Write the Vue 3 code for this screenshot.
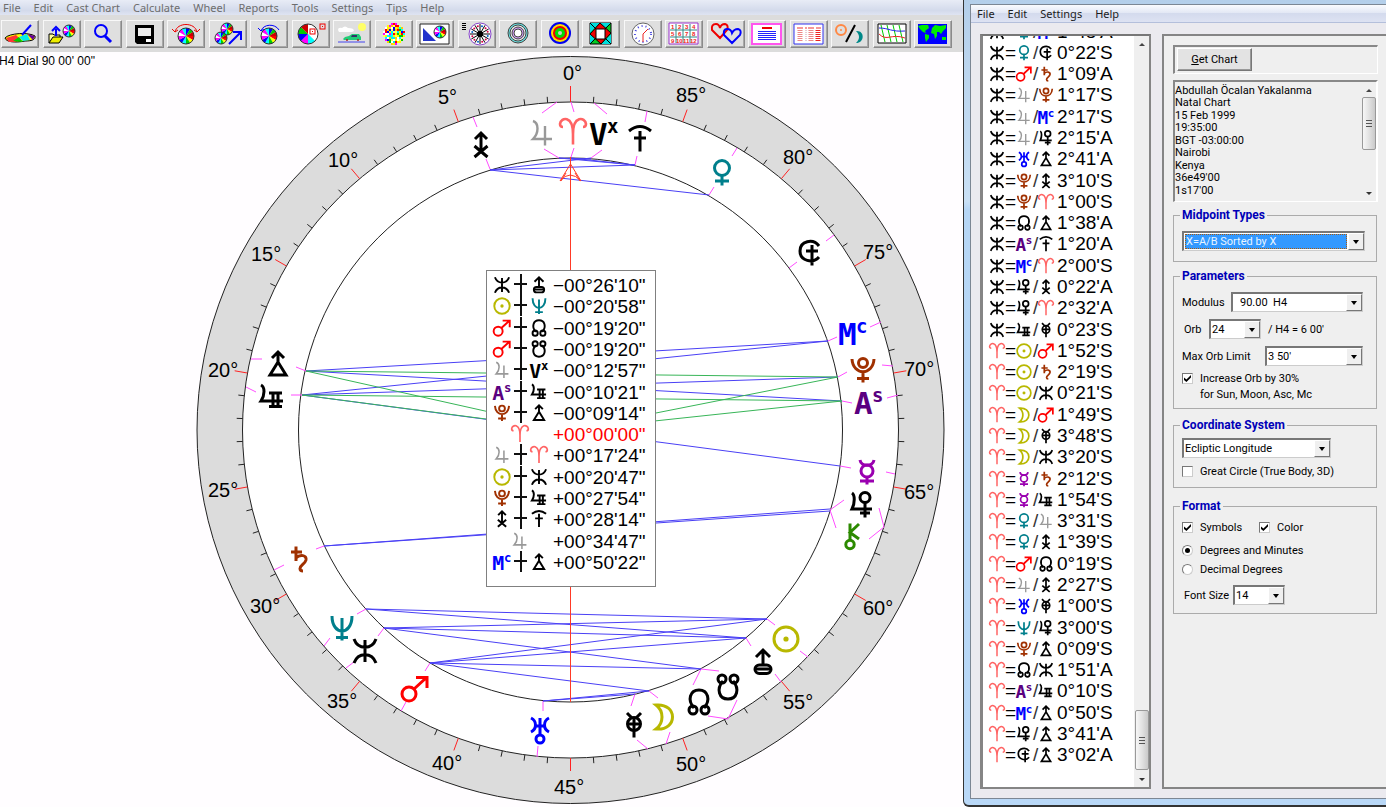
<script setup>
import { h, ref } from 'vue'

const BLACK = '#000000'
const MONO = '"DejaVu Sans Mono", monospace'

const label = (big, small) =>
  `<text x="-15" y="12" font-family='${MONO}' font-size="31" font-weight="700" fill="currentColor" stroke="none">${big}</text>` +
  `<text x="3" y="0" font-family='${MONO}' font-size="19" font-weight="700" fill="currentColor" stroke="none">${small}</text>`

/* Each drawing is centred on 0,0 in a box 28 units wide. */
const GLYPHS = {
  sun: ['#b8b800', '<circle r="12"/><circle r="2.6" fill="currentColor" stroke="none"/>'],
  moon: ['#b8b800', '<path d="M-8-12C14-14 14 14-8 12C0 6 0-6-8-12Z"/>'],
  mercury: ['#9a00b0', '<path d="M-7-12C-6-5 6-5 7-12M0 5V12.500M-7 9H7"/><circle cy="-1" r="6"/>'],
  venus: ['#007f8c', '<circle cy="-5" r="7.500"/><path d="M0 3V12.500M-7 8H7"/>'],
  mars: ['#ff0000', '<circle cx="-6" cy="5" r="7"/><path d="M-1 0L11-11M1-11.500H12V-1"/>'],
  jupiter: ['#999999', '<path stroke-width="2.400" d="M-9-12C-3-10-3 0-9 6H10M3-7V12.500"/>'],
  saturn: ['#a03000', '<path d="M-3-12.500V2M-8-7H3M-3-1C1-5 8-4 7 1C6 5 1 6 1 9.500Q1 12 4 12"/>'],
  uranus: ['#0000ff', '<path d="M-9-12C-3-9-3-1-9 2M9-12C3-9 3-1 9 2M-5-4H5M0-12V5"/><circle cy="9" r="4"/>'],
  neptune: ['#007f8c', '<path d="M-10-12C-10 8 10 8 10-12M0-10V12.500M-6 9.500H6"/>'],
  pluto: ['#a03000', '<circle cy="-7" r="4.500"/><path d="M-11-11C-10 6 10 6 11-11M0 2V12.500M-6 8.500H6"/>'],
  node: [BLACK, '<path d="M-5 6C-12-2-9-12 0-12S12-2 5 6"/><circle cx="-6" cy="8" r="4"/><circle cx="6" cy="8" r="4"/>'],
  snode: [BLACK, '<path d="M-5-6C-12 2-9 12 0 12S12 2 5-6"/><circle cx="-6" cy="-8" r="4"/><circle cx="6" cy="-8" r="4"/>'],
  aries: ['#ff6464', '<path stroke-width="2.600" d="M0 12.500V2C0-17-12-15-13-8Q-13-5-10-5M0 2C0-17 12-15 13-8Q13-5 10-5"/>'],
  chiron: ['#2c8a00', '<path d="M-3-12.500V4M6-12L-3-3.500L6 3"/><circle cx="-3" cy="8.500" r="4.200"/>'],
  asc: ['#5a0080', label('A', 's')],
  mc: ['#0000ff', label('M', 'c')],
  vertex: [BLACK, label('V', 'x')],
  poseidon: [BLACK, '<path d="M-11-12C-7-1 7-1 11-12M-11 12C-7 1 7 1 11 12M0-11V11"/>'],
  zeus: [BLACK, '<path d="M0-12V3M-7-5L0-12L7-5M-8 7H8"/><rect x="-8" y="3" width="16" height="8.500" rx="4.250"/>'],
  vulcanus: [BLACK, '<path d="M0-12.500V6M-6-6L0-12L6-6M-6.500 1L6.500 12M6.500 1L-6.500 12"/>'],
  kronos: [BLACK, '<path d="M0-12V0M-6-6L0-12L6-6M0-2L-8 11H8Z"/>'],
  admetos: [BLACK, '<path d="M-11-8Q0-17 11-8M0-8V12.500M-6-1H6"/>'],
  apollon: [BLACK, '<path d="M-11-12C-7-10-7-2-11 4H11M-3-4H10M-3 9.500H10M1-4V9.500M6-4V9.500"/>'],
  cupido: [BLACK, '<path d="M-10-12C-7-10-7-2-10 4H10M3-3V12.500M-2 8H8"/><circle cx="3" cy="-7.500" r="5"/>'],
  hades: [BLACK, '<path d="M9-7C3-15-10-12-10-2S3 11 9 4M2-8V12.500M-4-2H8"/>'],
  hermes: [BLACK, '<path d="M-7-12L-2-7M7-12L2-7M-7-1H7M0-7V12.500"/><circle r="6.500" cy="-1"/>']
}

const Glyph = ({ name, x, y, size }) =>
  h('svg', {
    x: x === undefined ? undefined : x - size / 2,
    y: y === undefined ? undefined : y - size / 2,
    width: size,
    height: size,
    viewBox: '-14 -14 28 28',
    overflow: 'visible',
    fill: 'none',
    stroke: 'currentColor',
    color: GLYPHS[name][0],
    'stroke-width': 3,
    'aria-hidden': 'true',
    innerHTML: GLYPHS[name][1]
  })
Glyph.props = ['name', 'x', 'y', 'size']

/* ---------- toolbar ---------- */
const HUES = ['#f00', '#ff0', '#0c0', '#0ff', '#00f', '#f0f', '#fff', '#f0f', '#0ff', '#00f', '#0c0', '#c00']
const pie = (cx, cy, r, hues = HUES) =>
  hues
    .map((c, i) => {
      const a = (i / hues.length) * Math.PI * 2
      const b = ((i + 1) / hues.length) * Math.PI * 2
      return `<path fill="${c}" d="M${cx} ${cy}L${cx + r * Math.cos(a)} ${cy + r * Math.sin(a)}A${r} ${r} 0 0 1 ${cx + r * Math.cos(b)} ${cy + r * Math.sin(b)}Z"/>`
    })
    .join('') + `<circle cx="${cx}" cy="${cy}" r="${r}" fill="none" stroke="#333"/>`

const mosaic = () => {
  let s = ''
  const c = ['#f00', '#ff0', '#0c0', '#0ff', '#00f', '#f0f', '#fff', '#fe0', '#fc0', '#0ee', '#ff6']
  for (let y = -5; y <= 5; y++)
    for (let x = -5; x <= 5; x++)
      if (x * x + y * y < 29)
        s += `<rect x="${18 + x * 2}" y="${13 + y * 2}" width="2" height="2" fill="${c[(x * x * 5 + y * y * 3 + x * y * 7 + x * 2 + y * 4 + 1100) % 11]}"/>`
  return s
}

const spokes = () => {
  let s = ''
  for (let i = 0; i < 12; i++) {
    const a = (i * Math.PI) / 6
    s += `<path stroke="#000" d="M22 14L${22 + 10 * Math.cos(a)} ${14 + 10 * Math.sin(a)}"/><circle cx="${22 + 8 * Math.cos(a + 0.25)}" cy="${14 + 8 * Math.sin(a + 0.25)}" r="1" fill="${i % 3 ? '#d04' : '#06c'}"/>`
  }
  return s
}

const TOOLS = [
  ['New chart', '<path d="M4 18C8 13 28 12 34 16C35 20 30 21 24 21C14 23 5 22 4 18Z" fill="#ff0" stroke="#000"/><path d="M5 18L15 15L18 18L14 22H8Z" fill="#f33"/><path d="M12 21L18 17L22 22Z" fill="#0c0"/><path d="M18 17L26 14L29 20L22 21Z" fill="#0ee"/><path d="M26 14L34 16L32 20Z" fill="#609"/><path d="M30 5L21 15" stroke="#00f" stroke-width="2"/>'],
  ['Open chart', '<path d="M6 23V14H10L11 15H17V18" fill="#ff9" stroke="#000"/><path d="M6 23L10 17H20L16 23Z" fill="#ee0" stroke="#000"/><path d="M13 16V9M9 11L13 7L17 11" stroke="#00f" stroke-width="2" fill="none"/>' + pie(26, 11, 6)],
  ['Find', '<circle cx="17" cy="11" r="6" fill="none" stroke="#00f" stroke-width="2"/><path d="M21 16L27 22" stroke="#00f" stroke-width="3"/>'],
  ['Save', '<path d="M9 5H28V24H11L9 22Z" fill="#000"/><path d="M12 8H25V16H12Z" fill="#eee"/><path d="M20 19H25V22H20Z" fill="#fff"/>'],
  ['Rotate wheel', pie(19, 16, 8) + '<path d="M8 12C10 2 28 2 30 12M5 9L8 12L11 10M27 10L30 12L33 9" fill="none" stroke="#e00"/>'],
  ['Progress', pie(18, 9, 6) + pie(12, 18, 6) + '<path d="M20 24L31 13M24 12H32V20" stroke="#00f" stroke-width="2" fill="none"/>'],
  ['Return', pie(19, 16, 8) + '<path d="M11 11C13 4 25 3 29 10M8 8L11 11L14 9" fill="none" stroke="#00f"/>'],
  ['Relocate', pie(16, 14, 10, ['#fff', '#0ff', '#f0f', '#00f', '#0c0', '#c00', '#fff', '#fff']) + '<g fill="none" stroke="#e00"><rect x="18" y="9" width="5" height="5"/><rect x="28" y="4" width="5" height="5"/></g><path d="M20 11h1v1h-1zM30 6h1v1h-1z" fill="#e00"/>'],
  ['Travel', '<path d="M5 10Q5 7 9 8Q12 5 15 8Q21 8 21 11L19 12H6Z" fill="#fff"/><circle cx="29" cy="7" r="4" fill="#ff6"/><path d="M10 19L12 17L16 16L19 14H26L28 17V20H11Z" fill="#2c7"/><path d="M19 15h5v2h-6z" fill="#336"/><circle cx="14" cy="20" r="1" fill="#a22"/><circle cx="25" cy="20" r="1" fill="#a22"/><path d="M5 22H32" stroke="#44e"/>'],
  ['Mosaic', mosaic()],
  ['Graphic page', '<path d="M4 4H33V24H4Z" fill="#fff" stroke="#222"/><path d="M7 8V21H20Z" fill="#23c"/>' + pie(24, 12, 6)],
  ['Wheel and list', '<path d="M4 3.500H8M4 5.500H8M4 7.500H8M4 9.500H8" stroke="#000"/><circle cx="22" cy="14" r="11" fill="#fff" stroke="#84c"/>' + spokes() + '<circle cx="22" cy="14" r="3" fill="#000"/>'],
  ['Bi-wheel', '<g stroke="#444"><circle cx="19" cy="13" r="10" fill="#6dd"/><circle cx="19" cy="13" r="8" fill="#eee"/><circle cx="19" cy="13" r="6" fill="#c9e"/><circle cx="19" cy="13" r="4" fill="#fff"/></g>'],
  ['Quad-wheel', '<circle cx="19" cy="13" r="11" fill="#00e"/><circle cx="19" cy="13" r="9" fill="#fd0"/><circle cx="19" cy="13" r="7" fill="#e00"/><circle cx="19" cy="13" r="5" fill="#0d0"/><circle cx="19" cy="13" r="2" fill="#ccc"/>'],
  ['Square chart', '<path d="M8 3H29V24H8Z" fill="#0c2" stroke="#000"/><path d="M8 3L18 3L8 13ZM29 24V14L19 24Z" fill="#0dd"/><path d="M18 3L23 8L29 3M8 13L13 18L8 24" fill="#0dd"/><path d="M18 3L29 13L19 24L8 14Z" fill="#e00" stroke="#000"/><path d="M8 3L29 24M29 3L8 24" stroke="#000"/><path d="M14 9H23V19H14Z" fill="#fff" stroke="#000"/>'],
  ['Clock', '<circle cx="19" cy="14" r="11" fill="#fff" stroke="#666"/><circle cx="19" cy="14" r="8" fill="none" stroke="#44d" stroke-width="2" stroke-dasharray="1 3"/><path d="M19 22V14L24 9" fill="none" stroke="#e22"/>'],
  ['Calendar', '<path d="M4 3H33V24H4Z" fill="#fff" stroke="#93c"/><path d="M11 4V23M18 4V23M25 4V23M5 10H32M5 17H32" stroke="#388"/><g font-family="Liberation Sans" font-size="6" font-weight="700" fill="#e22"><text x="6" y="9">1</text><text x="13" y="9">2</text><text x="20" y="9">3</text><text x="27" y="9">4</text><text x="6" y="16">5</text><text x="13" y="16">6</text><text x="20" y="16">7</text><text x="27" y="16">8</text><text x="6" y="23">9</text><text x="11" y="23">10</text><text x="18" y="23">11</text><text x="25" y="23">12</text></g>'],
  ['Synastry', '<path d="M13 18L5 10Q4 4 9 4Q12 4 13 8Q14 4 18 4Q22 5 20 10Z" fill="none" stroke="#e00" stroke-width="2"/><path d="M25 23L17 15Q16 9 20 9Q24 9 25 13Q27 9 31 9Q35 10 33 15Z" fill="none" stroke="#00f" stroke-width="2"/>'],
  ['Report', '<path d="M4 4H33V24H4Z" fill="#fff" stroke="#f5e" stroke-width="2"/><path d="M14 8H24" stroke="#e00" stroke-width="2"/><path d="M10 11.500H28M10 13.500H28M10 15.500H28M10 17.500H28M10 19.500H28" stroke="#22f"/>'],
  ['Table', '<path d="M4 4H33V24H4Z" fill="#fff" stroke="#33e"/><path d="M7 8H13M15 8H17M18 8H24M26 8H31" stroke="#e33"/><g fill="none" stroke-width="5" stroke-dasharray="1 1"><path d="M10 10V22M21 10V22" stroke="#e88"/><path d="M28 10V22" stroke="#e22"/><path d="M16 10V22" stroke="#c9a" stroke-width="1"/></g>'],
  ['Planets', '<circle cx="10" cy="10" r="5" fill="none" stroke="#f84" stroke-width="2"/><circle cx="10" cy="10" r="1" fill="#f84"/><path d="M24 5L15 22" stroke="#000" stroke-width="2"/><path d="M25 11C34 10 34 23 25 23C29 19 29 15 25 11Z" fill="#088"/>'],
  ['Graphic ephemeris', '<path d="M5 4H33V23H5Z" fill="#fff" stroke="#000"/><path d="M8 5L12 22M14 5L18 22M20 5L24 22M26 5L30 22" stroke="#0c0" fill="none"/><path d="M6 14C14 22 18 13 32 18" stroke="#e22" fill="none"/><path d="M6 8C16 8 18 12 32 11" stroke="#22e" fill="none"/>'],
  ['Map', '<path d="M4 4H33V24H4Z" fill="#00f"/><path d="M4 6L8 5H14L15 8L11 11L12 13L9 12L6 9ZM11 14L15 15V18L12 22L11 18ZM18 8L21 5L26 6L32 5V8L29 11L27 14L25 12L23 12L23 16L21 19L20 14L17 13ZM28 17H32V20H28Z" fill="#0e0"/>']
]

const MAIN_MENU = ['File', 'Edit', 'Cast Chart', 'Calculate', 'Wheel', 'Reports', 'Tools', 'Settings', 'Tips', 'Help']
const SIDE_MENU = ['File', 'Edit', 'Settings', 'Help']

/* ---------- dial ---------- */
const CX = 570.5
const CY = 430
const at = (deg, r) => {
  const a = (deg * 4 * Math.PI) / 180
  return [CX - r * Math.sin(a), CY - r * Math.cos(a)]
}
const ticks = Array.from({ length: 90 }, (_, d) => {
  const major = d % 5 === 0
  const [x1, y1] = at(d, 328)
  const [x2, y2] = at(d, major ? (d ? 341 : 344) : 334)
  return { x1, y1, x2, y2, major }
})

const DEGREES = [
  [0, 563, 80], [5, 438, 104], [10, 328, 167], [15, 251, 261], [20, 208, 377], [25, 208, 497],
  [30, 250, 613], [35, 327, 708], [40, 432, 770], [45, 554, 794], [50, 676, 771], [55, 783, 709],
  [60, 863, 615], [65, 904, 499], [70, 904, 376], [75, 863, 259], [80, 783, 164], [85, 676, 102]
]

const BODIES = [
  ['vulcanus', 481, 145], ['jupiter', 542, 133], ['aries', 573, 132], ['vertex', 604, 133], ['admetos', 640, 139],
  ['venus', 722, 173], ['hades', 810, 253], ['mc', 853, 333], ['pluto', 863, 370], ['asc', 869, 402],
  ['mercury', 867, 472], ['cupido', 862, 505], ['chiron', 853, 536], ['sun', 786, 639], ['zeus', 763, 662],
  ['snode', 728, 687], ['node', 699, 702], ['moon', 664, 717], ['hermes', 634, 725], ['uranus', 540, 730],
  ['mars', 415, 689], ['poseidon', 365, 651], ['neptune', 342, 628], ['saturn', 299, 559], ['kronos', 278, 364],
  ['apollon', 272, 397]
]

const POINTERS = [
  'M557 102L542 113', 'M473 117L477 127', 'M251 359H262', 'M246 387L256 392', 'M544 149L559 158',
  'M486 159L490 169', 'M296 367L306 371', 'M291 395L302 395', 'M571 102L574 112', 'M594 103L607 114',
  'M647 111L645 122', 'M737 148L732 156', 'M834 235L826 241', 'M881 322L870 327', 'M893 366L882 365',
  'M898 395L887 398', 'M571 157L574 148', 'M591 158L602 150', 'M635 165L637 156', 'M709 195L714 187',
  'M789 268L797 262', 'M828 341L837 337', 'M838 377L847 372', 'M842 401L852 403', 'M274 570L284 565',
  'M316 549L324 546', 'M357 614L366 609', 'M378 636L384 628', 'M330 638L324 646', 'M346 668L354 662',
  'M425 671L430 663', 'M406 702L401 711', 'M543 701L543 711', 'M538 746L537 757', 'M840 466L851 468',
  'M886 472L895 474', 'M844 500L830 510L836 528', 'M879 508L884 527L869 539', 'M767 619L775 625',
  'M800 651L808 657', 'M746 638L751 646', 'M775 674L781 682', 'M719 671L701 669L693 685',
  'M737 700L728 719L708 716', 'M649 691L658 698', 'M666 744L670 732', 'M635 694L631 706', 'M648 749L637 740'
]

const BLUE_LINES = [
  'M490 170L591 158', 'M490 170L635 165', 'M490 170L709 195', 'M559 158L635 165', 'M571 158L635 165', 'M559 158L591 159',
  'M306 371L828 341', 'M306 371L842 401', 'M302 395L828 341', 'M302 395L838 377', 'M302 395L840 466',
  'M324 546L830 509', 'M324 546L830 511',
  'M366 609L767 619', 'M366 609L746 638', 'M384 628L767 619', 'M384 628L746 638', 'M384 628L701 669',
  'M430 663L767 619', 'M430 663L746 638', 'M430 663L701 669', 'M430 663L649 691',
  'M543 701L635 694', 'M543 701L649 691'
]
const GREEN_LINES = [
  'M306 371L838 377', 'M306 371L570 430L838 377', 'M302 395L842 401', 'M302 395L570 430L842 401'
]

const TREE = [
  ['poseidon', 'zeus', '−00°26\'10"'], ['sun', 'neptune', '−00°20\'58"'], ['mars', 'node', '−00°19\'20"'],
  ['mars', 'snode', '−00°19\'20"'], ['jupiter', 'vertex', '−00°12\'57"'], ['asc', 'apollon', '−00°10\'21"'],
  ['pluto', 'kronos', '−00°09\'14"'], ['aries', null, '+00°00\'00"'], ['jupiter', 'aries', '+00°17\'24"'],
  ['sun', 'poseidon', '+00°20\'47"'], ['pluto', 'apollon', '+00°27\'54"'], ['vulcanus', 'admetos', '+00°28\'14"'],
  ['jupiter', null, '+00°34\'47"'], ['mc', 'kronos', '+00°50\'22"']
].map(([a, b, text], i) => ({ a, b, text, y: Math.round(285 + (i * 277) / 13) }))

/* ---------- midpoint list ---------- */
const MIDPOINTS = [
  'poseidon venus mc 1°48\'A', 'poseidon venus hades 0°22\'S', 'poseidon mars saturn 1°09\'A', 'poseidon jupiter pluto 1°17\'S',
  'poseidon jupiter mc 2°17\'S', 'poseidon jupiter cupido 2°15\'A', 'poseidon uranus kronos 2°41\'A',
  'poseidon pluto vulcanus 3°10\'S', 'poseidon pluto aries 1°00\'S', 'poseidon node kronos 1°38\'A',
  'poseidon asc admetos 1°20\'A', 'poseidon mc aries 2°00\'S', 'poseidon cupido vulcanus 0°22\'A',
  'poseidon cupido aries 2°32\'A', 'poseidon apollon hermes 0°23\'S', 'aries sun mars 1°52\'S',
  'aries sun saturn 2°19\'S', 'aries sun poseidon 0°21\'S', 'aries moon mars 1°49\'S', 'aries moon hermes 3°48\'S',
  'aries moon poseidon 3°20\'S', 'aries mercury saturn 2°12\'S', 'aries mercury apollon 1°54\'S',
  'aries venus jupiter 3°31\'S', 'aries venus vulcanus 1°39\'S', 'aries mars node 0°19\'S',
  'aries jupiter vulcanus 2°27\'S', 'aries uranus hermes 1°00\'S', 'aries neptune cupido 3°00\'S',
  'aries pluto kronos 0°09\'S', 'aries node poseidon 1°51\'A', 'aries asc apollon 0°10\'S', 'aries mc kronos 0°50\'S',
  'aries cupido kronos 3°41\'A', 'aries hades kronos 3°02\'A'
].map((row) => row.split(' '))

const CHART_INFO = ['Abdullah Öcalan Yakalanma', 'Natal Chart', '15 Feb 1999', '19:35:00', 'BGT -03:00:00', 'Nairobi', 'Kenya', "36e49'00", "1s17'00"]

const wider = ref(true)
const greatCircle = ref(false)
const symbols = ref(true)
const colour = ref(true)
const unit = ref('minutes')
</script>

<template>
  <div class="screen">
    <main class="chart-window">
      <nav class="menu main-menu">
        <button v-for="m in MAIN_MENU" :key="m" type="button">{{ m }}</button>
      </nav>
      <div class="toolbar">
        <button v-for="t in TOOLS" :key="t[0]" type="button" class="tool" :aria-label="t[0]">
          <svg viewBox="0 0 38 28" v-html="t[1]"></svg>
        </button>
      </div>
      <svg class="dial" viewBox="0 52 963 755">
        <text class="title" x="-1" y="65">H4 Dial 90 00' 00"</text>
        <circle class="ring" :cx="CX" :cy="CY" r="373.500" />
        <circle class="disc" :cx="CX" :cy="CY" r="328" />
        <circle class="disc" :cx="CX" :cy="CY" r="272" />
        <line
          v-for="(t, i) in ticks"
          :key="i"
          :class="t.major ? 'tick major' : 'tick'"
          :x1="t.x1"
          :y1="t.y1"
          :x2="t.x2"
          :y2="t.y2"
        />
        <text v-for="d in DEGREES" :key="d[0]" class="degree" :x="d[1]" :y="d[2]">{{ d[0] }}°</text>
        <path class="pointer" :d="POINTERS.join('')" />
        <path class="blue" :d="BLUE_LINES.join('')" />
        <path class="green" :d="GREEN_LINES.join('')" />
        <path class="needle" d="M570.5 157V702M570.5 164L560 181Q570 169 581 181ZM566 173L561 181M575 173L580 181" />
        <Glyph v-for="b in BODIES" :key="b[0]" :name="b[0]" :x="b[1]" :y="b[2]" :size="28" />

        <rect class="tree-box" x="486.500" y="270.500" width="169" height="316" />
        <g v-for="(r, i) in TREE" :key="'t' + i">
          <template v-if="r.b">
            <Glyph :name="r.a" :x="502" :y="r.y" :size="18" />
            <path class="branch" :d="`M521 ${r.y - 11}V${r.y + 10}M514 ${r.y - 1}H527`" />
            <Glyph :name="r.b" :x="539" :y="r.y" :size="18" />
          </template>
          <Glyph v-else :name="r.a" :x="520" :y="r.y" :size="18" />
          <text :class="r.a === 'aries' ? 'orb exact' : 'orb'" x="553" :y="r.y + 7">{{ r.text }}</text>
        </g>
      </svg>
    </main>

    <aside class="midpoint-window">
      <div class="client">
        <nav class="menu side-menu">
          <button v-for="m in SIDE_MENU" :key="m" type="button">{{ m }}</button>
        </nav>
        <div class="panes">
          <div class="list-pane">
            <ul class="rows">
              <li v-for="(m, i) in MIDPOINTS" :key="i">
                <Glyph :name="m[0]" :size="16" />
                <span>=</span>
                <Glyph :name="m[1]" :size="16" />
                <span class="slash">/</span>
                <Glyph :name="m[2]" :size="16" />
                <span class="value">{{ m[3] }}</span>
              </li>
            </ul>
            <div class="scroll">
              <i class="up"></i>
              <span class="thumb list-thumb"><b></b></span>
              <i class="down"></i>
            </div>
          </div>

          <form class="settings" @submit.prevent>
            <div class="actions">
              <button type="button" class="get"><u>G</u>et Chart</button>
            </div>
            <div class="info">
              <div class="info-text">
                <div v-for="l in CHART_INFO" :key="l">{{ l }}</div>
              </div>
              <div class="scroll">
                <i class="up"></i>
                <span class="thumb info-thumb"><b></b></span>
                <i class="down"></i>
              </div>
            </div>

            <fieldset class="types">
              <legend>Midpoint Types</legend>
              <span class="combo chosen w-type">
                <select aria-label="Midpoint type"><option>X=A/B Sorted by X</option></select><span class="drop"></span>
              </span>
            </fieldset>

            <fieldset class="params">
              <legend>Parameters</legend>
              <div class="line">
                <label for="modulus" class="l-mod">Modulus</label>
                <span class="combo indent w-mod"><select id="modulus"><option>90.00&nbsp; H4</option></select><span class="drop"></span></span>
              </div>
              <div class="line">
                <label for="orb" class="l-orb">Orb</label>
                <span class="combo w-small"><select id="orb"><option>24</option></select><span class="drop"></span></span>
                <span class="note">/ H4 = 6 00'</span>
              </div>
              <div class="line">
                <label for="limit" class="l-max">Max Orb Limit</label>
                <span class="combo w-max"><select id="limit"><option>3 50'</option></select><span class="drop"></span></span>
              </div>
              <label class="check two">
                <input v-model="wider" type="checkbox" />
                <span>Increase Orb by 30%<br />for Sun, Moon, Asc, Mc</span>
              </label>
            </fieldset>

            <fieldset class="coords">
              <legend>Coordinate System</legend>
              <span class="combo w-coord">
                <select aria-label="Coordinate system"><option>Ecliptic Longitude</option></select><span class="drop"></span>
              </span>
              <label class="check"><input v-model="greatCircle" type="checkbox" /><span>Great Circle (True Body, 3D)</span></label>
            </fieldset>

            <fieldset class="format">
              <legend>Format</legend>
              <div class="pair">
                <label class="check"><input v-model="symbols" type="checkbox" /><span>Symbols</span></label>
                <label class="check"><input v-model="colour" type="checkbox" /><span>Color</span></label>
              </div>
              <label class="check"><input v-model="unit" type="radio" value="minutes" /><span>Degrees and Minutes</span></label>
              <label class="check"><input v-model="unit" type="radio" value="decimal" /><span>Decimal Degrees</span></label>
              <div class="line">
                <label for="size" class="l-size">Font Size</label>
                <span class="combo w-small"><select id="size"><option>14</option></select><span class="drop"></span></span>
              </div>
            </fieldset>
          </form>
        </div>
      </div>
    </aside>
  </div>
</template>

<style>
html,
body,
#app {
  height: 100%;
}
body {
  margin: 0;
  overflow: hidden;
}
</style>

<style scoped>
.screen {
  display: grid;
  grid-template-columns: minmax(0, 1fr) 423px;
  height: 100%;
  overflow: hidden;
  background: #fffdff;
  color: #000;
  font-family: "Liberation Sans", Arial, sans-serif;
  font-size: 11px;
}
* {
  box-sizing: border-box;
}
button {
  font: inherit;
  color: inherit;
}
.chart-window {
  display: flex;
  flex-direction: column;
  min-width: 0;
  min-height: 0;
}
.menu {
  display: flex;
  flex: none;
  font-family: "Noto Sans", "Open Sans", sans-serif;
  font-size: 11px;
}
.menu button {
  padding: 0;
  border: 0;
  background: none;
  white-space: nowrap;
}
.main-menu {
  gap: 13px;
  height: 15px;
  padding-left: 3px;
  background: linear-gradient(#e8ecf6, #d3daeb 70%, #dfe4f2);
  color: #6d6d6d;
  line-height: 13px;
}
.toolbar {
  display: flex;
  flex: none;
  justify-content: space-between;
  height: 37px;
  padding: 5px 11px 4px 1px;
  background: #dcdcdc;
}
.tool {
  width: 38px;
  height: 28px;
  padding: 0;
  border: 1px solid;
  border-color: #f8f8f8 #8a8a8a #8a8a8a #f8f8f8;
  box-shadow: inset -1px -1px #a8a8a8;
  background: #dfdfdf;
}
.tool svg {
  display: block;
  width: 38px;
  height: 28px;
  margin: -1px;
}
.dial {
  flex: 1;
  width: 100%;
  min-height: 0;
}
.title {
  font-size: 12px;
}
.ring {
  fill: #dcdcdc;
  stroke: #222;
}
.disc {
  fill: #fff;
  stroke: #222;
}
.tick {
  stroke: #222;
}
.major {
  stroke: #f22;
}
.degree {
  font-size: 20px;
}
.pointer,
.blue,
.green,
.needle {
  fill: none;
}
.pointer {
  stroke: #ff4dff;
}
.blue {
  stroke: #4a40f5;
}
.green {
  stroke: #38b558;
}
.needle {
  stroke: #ff3a26;
}
.tree-box {
  fill: #fff;
  stroke: #808080;
}
.branch {
  fill: none;
  stroke: #111;
  stroke-width: 2;
}
.orb {
  font-size: 19px;
}
.exact {
  fill: #f00;
}

.midpoint-window {
  display: flex;
  min-width: 0;
  min-height: 0;
  padding: 4px 0 6px 6px;
  border-left: 1px solid #333;
  border-bottom: 2px solid #333;
  border-radius: 0 0 0 6px;
  background: linear-gradient(#b4cfea, #c9e0f5 25%, #b6d6f5 26%, #b9d8f7);
}
.client {
  display: flex;
  flex: 1;
  flex-direction: column;
  min-width: 0;
  border: 1px solid #7c8794;
  border-right: 0;
  background: #ebeaef;
}
.side-menu {
  gap: 13px;
  height: 18px;
  padding-left: 6px;
  border-bottom: 1px solid #b4bfdb;
  background: linear-gradient(#fafbfe, #e3e8f5 45%, #d3daed 46%, #dde2f2);
  color: #1c1c1c;
  line-height: 18px;
}
.panes {
  display: flex;
  flex: 1;
  gap: 11px;
  min-height: 0;
  padding: 11px 0 9px 9px;
}
.list-pane {
  display: flex;
  width: 171px;
  overflow: hidden;
  border: 1px solid #858585;
  border-width: 2px 2px 2px 3px;
  border-top-color: #777;
  background: #fff;
}
.rows {
  display: grid;
  flex: 1;
  grid-auto-rows: 1fr;
  margin: -15px 0 21px;
  padding: 0 0 0 5px;
  list-style: none;
}
.rows li {
  display: grid;
  grid-template-columns: 17px 10px 18px 4px 17px auto;
  align-items: center;
  min-height: 0;
  font-size: 19px;
  line-height: 20px;
  white-space: nowrap;
}
.rows svg {
  justify-self: center;
}
.slash {
  color: #333;
}
.value {
  padding-left: 3px;
}
.scroll {
  display: flex;
  flex: none;
  flex-direction: column;
  align-items: center;
  width: 15px;
  background: #efefef;
}
.scroll i {
  width: 0;
  border: 3px solid transparent;
}
.scroll .up {
  margin: 4px 0 5px;
  border-bottom-color: #444;
}
.scroll .down {
  margin: 8px 0 3px;
  border-top-color: #333;
}
.thumb {
  display: flex;
  align-items: center;
  justify-content: center;
  width: 14px;
  border: 1px solid #999;
  border-radius: 2px;
  background: linear-gradient(90deg, #f7f7f7, #e2e2e2 50%, #c9c9c9);
}
.thumb b {
  width: 6px;
  height: 7px;
  background: repeating-linear-gradient(#555 0 1px, transparent 1px 3px);
}
.list-thumb {
  height: 60px;
  margin-top: auto;
}
.info-thumb {
  height: 53px;
  margin-bottom: auto;
}
.settings {
  flex: 1;
  min-width: 0;
  padding: 9px 8px 0 9px;
  border: 2px solid #858585;
  border-right: 0;
  background: #efefef;
  font-family: Roboto, "Liberation Sans", sans-serif;
}
.actions {
  height: 29px;
  padding: 1px 2px;
  border: 1px solid;
  border-width: 2px 1px 1px 2px;
  border-color: #888 #fff #fff #888;
}
.get {
  width: 75px;
  height: 23px;
  padding: 0;
  border: 1px solid;
  border-color: #fff #777 #777 #fff;
  box-shadow: inset -1px -1px #999;
  background: #e3e3e3;
}
.info {
  display: flex;
  height: 122px;
  margin-top: 6px;
  border: 1px solid;
  border-width: 2px 2px 1px;
  border-color: #888 #fff #fff #888;
}
.info-text {
  flex: 1;
  padding-top: 2px;
  font-size: 11px;
  line-height: 13px;
  white-space: nowrap;
}
.info-text div {
  height: 12px;
}
.info-text div:nth-child(even) {
  height: 13px;
}
fieldset {
  min-width: 0;
  margin: 0 1px 0 0;
  padding: 0 0 0 8px;
  border: 1px solid #ababab;
  box-shadow: none;
}
legend {
  height: 14px;
  padding: 0 2px;
  margin-left: -2px;
  color: #0000b8;
  font-size: 12px;
  font-weight: 700;
  line-height: 14px;
}
.types {
  height: 54px;
  margin-top: 6px;
  padding-top: 9px;
}
.params {
  height: 140px;
  margin-top: 7px;
  padding-top: 9px;
}
.coords {
  height: 70px;
  margin-top: 9px;
  padding-top: 6px;
}
.format {
  height: 115px;
  margin-top: 11px;
  padding-top: 8px;
}
.line {
  display: flex;
  align-items: center;
  height: 20px;
  margin-bottom: 7px;
  white-space: nowrap;
}
.l-mod {
  width: 49px;
}
.l-orb {
  width: 27px;
  padding-left: 2px;
}
.l-max {
  width: 83px;
}
.l-size {
  width: 51px;
  padding-left: 2px;
}
.note {
  padding-left: 7px;
}
.combo {
  display: flex;
  height: 20px;
  border: 1px solid;
  border-width: 2px 1px 1px 2px;
  border-color: #777 #ccc #ccc #777;
  background: #fff;
}
.combo select {
  flex: 1;
  min-width: 0;
  padding: 0 0 0 1px;
  border: 0;
  border-radius: 0;
  outline: 0;
  appearance: none;
  background: none;
  color: #000;
  font: inherit;
}
.combo.indent select {
  padding-left: 7px;
}
.combo.chosen select {
  margin: 1px;
  padding: 0;
  border: 1px dotted #a65a10;
  background: #3399ff;
  color: #e8f4ff;
}
.drop {
  display: flex;
  align-items: center;
  justify-content: center;
  width: 16px;
  border: 1px solid;
  border-color: #fff #777 #777 #fff;
  background: #efefef;
}
.drop::before {
  content: "";
  border: 3px solid transparent;
  border-top: 4px solid #000;
  border-bottom: 0;
}
.w-type {
  width: 183px;
}
.w-mod {
  width: 132px;
}
.w-small {
  width: 52px;
}
.w-max {
  width: 98px;
}
.w-coord {
  width: 149px;
}
.check {
  display: flex;
  gap: 7px;
  align-items: center;
  white-space: nowrap;
}
.check.two {
  align-items: flex-start;
  margin-top: -2px;
  line-height: 16px;
}
.check.two input {
  margin-top: 2px;
}
.check input {
  display: grid;
  place-items: center;
  width: 11px;
  height: 11px;
  margin: 0;
  border: 1px solid;
  border-color: #777 #ccc #ccc #777;
  appearance: none;
  background: #fff;
}
.check input[type="radio"] {
  border-radius: 50%;
}
.check input[type="checkbox"]:checked::before {
  content: "";
  width: 7px;
  height: 7px;
  background: #000;
  clip-path: polygon(0 35%, 35% 65%, 100% 0, 100% 35%, 35% 100%, 0 70%);
}
.check input[type="radio"]:checked::before {
  content: "";
  width: 5px;
  height: 5px;
  border-radius: 50%;
  background: #000;
}
.coords .check {
  margin-top: 7px;
}
.pair {
  display: grid;
  grid-template-columns: 77px auto;
  margin-bottom: 10px;
}
.format > .check {
  margin-bottom: 6px;
}
.format .line {
  margin-top: 9px;
}
</style>
